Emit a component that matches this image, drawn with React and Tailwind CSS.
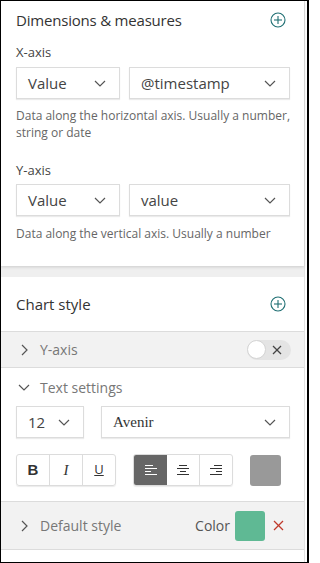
import React from "react";

const Chevron = ({ dir = "down", className = "" }) => (
  <svg width="12" height="12" viewBox="0 0 12 12" className={className} fill="none" stroke="#555" strokeWidth="1.2">
    {dir === "down" ? <polyline points="1,4 6,9 11,4" /> : <polyline points="4,1 9,6 4,11" />}
  </svg>
);

const Plus = () => (
  <svg width="16" height="16" viewBox="0 0 16 16" fill="none" stroke="#1f6f73" strokeWidth="1.1">
    <circle cx="8" cy="8" r="7" />
    <line x1="8" y1="4" x2="8" y2="12" />
    <line x1="4" y1="8" x2="12" y2="8" />
  </svg>
);

const Select = ({ label, className = "", serif = false }) => (
  <div className={`flex items-center justify-between h-[32px] border border-[#dcdcdc] bg-white shadow-[0_1px_1px_rgba(0,0,0,0.08)] pl-[11px] pr-[13px] ${className}`}>
    <span className={`${serif ? "font-['Liberation_Serif',serif] text-[15px] text-[#333]" : "text-[15px] text-[#444]"}`}>{label}</span>
    <Chevron />
  </div>
);

const AlignIcon = ({ type, color }) => {
  const lines =
    type === "left"
      ? [[0, 8], [0, 12], [0, 6], [0, 12]]
      : type === "center"
      ? [[2, 10], [0, 12], [3, 9], [0, 12]]
      : [[4, 12], [0, 12], [6, 12], [0, 12]];
  return (
    <svg width="12" height="11" viewBox="0 0 12 11" stroke={color} strokeWidth="1">
      {lines.map(([x1, x2], i) => (
        <line key={i} x1={x1} x2={x2} y1={0.5 + i * 3} y2={0.5 + i * 3} />
      ))}
    </svg>
  );
};

export default function App() {
  return (
    <div className="w-[309px] h-[563px] border-l border-t border-b border-r-2 border-black bg-white overflow-hidden font-['Open_Sans',sans-serif] text-[#333]">
      <div className="w-[304px] h-full flex flex-col bg-[#efefef] border-r border-[#e2e2e2]">
        {/* Card 1 */}
        <div className="bg-white pb-[24px] shadow-[0_1px_3px_rgba(0,0,0,0.15)]">
          <div className="flex items-center justify-between pl-[15px] pr-[18px] h-[38px]">
            <span className="text-[15px] tracking-[-0.2px] text-[#333]">Dimensions &amp; measures</span>
            <Plus />
          </div>
          <div className="pl-[15px] pr-[14px]">
            <div className="text-[13px] text-[#444] mt-[4px] leading-[18px]">X-axis</div>
            <div className="flex gap-[9px] mt-[6px]">
              <Select label="Value" className="w-[104px]" />
              <Select label="@timestamp" className="flex-1" />
            </div>
            <div className="text-[12px] text-[#666] leading-[17px] mt-[8px]">
              Data along the horizontal axis. Usually a number, string or date
            </div>
            <div className="text-[13px] text-[#444] mt-[20px] leading-[18px]">Y-axis</div>
            <div className="flex gap-[9px] mt-[5px]">
              <Select label="Value" className="w-[104px]" />
              <Select label="value" className="flex-1" />
            </div>
            <div className="text-[12px] text-[#666] leading-[17px] mt-[9px]">
              Data along the vertical axis. Usually a number
            </div>
          </div>
        </div>
        <div className="h-[11px]" />
        {/* Card 2 */}
        <div className="bg-white flex-1 flex flex-col">
          <div className="flex items-center justify-between pl-[15px] pr-[18px] h-[55px] border-b border-[#dcdcdc]">
            <span className="text-[15px] text-[#333]">Chart style</span>
            <Plus />
          </div>
          <div className="flex items-center justify-between h-[36px] bg-[#f2f2f2] border-b border-[#dcdcdc] pl-[17px] pr-[13px]">
            <div className="flex items-center gap-[10px]">
              <Chevron dir="right" />
              <span className="text-[14px] text-[#777]">Y-axis</span>
            </div>
            <div className="relative w-[44px] h-[20px] rounded-full bg-[#e4e4e4] flex items-center">
              <div className="w-[19px] h-[19px] rounded-full bg-white border border-[#d4d4d4]" />
              <svg width="10" height="10" viewBox="0 0 10 10" className="ml-[6px]" stroke="#444" strokeWidth="1.2">
                <line x1="1" y1="1" x2="9" y2="9" />
                <line x1="9" y1="1" x2="1" y2="9" />
              </svg>
            </div>
          </div>
          <div className="flex items-center gap-[10px] h-[38px] pl-[17px]">
            <Chevron />
            <span className="text-[14px] text-[#777]">Text settings</span>
          </div>
          <div className="flex gap-[17px] pl-[15px] pr-[14px]">
            <Select label="12" className="w-[68px]" />
            <Select label="Avenir" serif className="flex-1" />
          </div>
          <div className="flex items-center pl-[15px] mt-[16px] h-[32px]">
            <div className="flex h-[32px] border border-[#dcdcdc] rounded-[3px] shadow-[0_1px_1px_rgba(0,0,0,0.08)]">
              <div className="w-[33px] flex items-center justify-center border-r border-[#dcdcdc] text-[15px] font-bold font-['Liberation_Sans',sans-serif] text-[#333]">B</div>
              <div className="w-[33px] flex items-center justify-center border-r border-[#dcdcdc] text-[15px] italic font-['Liberation_Serif',serif] text-[#333]">I</div>
              <div className="w-[32px] flex items-center justify-center text-[13px] underline text-[#333]">U</div>
            </div>
            <div className="flex h-[32px] ml-[17px] border border-[#dcdcdc] rounded-[3px] overflow-hidden shadow-[0_1px_1px_rgba(0,0,0,0.08)]">
              <div className="w-[33px] flex items-center justify-center bg-[#666]">
                <AlignIcon type="left" color="#fff" />
              </div>
              <div className="w-[33px] flex items-center justify-center border-r border-[#dcdcdc]">
                <AlignIcon type="center" color="#333" />
              </div>
              <div className="w-[32px] flex items-center justify-center">
                <AlignIcon type="right" color="#333" />
              </div>
            </div>
            <div className="w-[31px] h-[31px] rounded-[3px] bg-[#999] ml-[17px]" />
          </div>
          <div className="mt-[15px] flex items-center justify-between h-[49px] bg-[#f2f2f2] border-t border-b border-[#dcdcdc] pl-[17px] pr-[20px]">
            <div className="flex items-center gap-[10px]">
              <Chevron dir="right" />
              <span className="text-[14px] text-[#777]">Default style</span>
            </div>
            <div className="flex items-center">
              <span className="text-[14px] text-[#555]">Color</span>
              <div className="w-[30px] h-[30px] rounded-[3px] bg-[#5fb994] ml-[5px]" />
              <svg width="11" height="11" viewBox="0 0 11 11" className="ml-[8px]" stroke="#c0392b" strokeWidth="1.2">
                <line x1="1" y1="1" x2="10" y2="10" />
                <line x1="10" y1="1" x2="1" y2="10" />
              </svg>
            </div>
          </div>
          <div className="flex-1" />
        </div>
      </div>
    </div>
  );
}
